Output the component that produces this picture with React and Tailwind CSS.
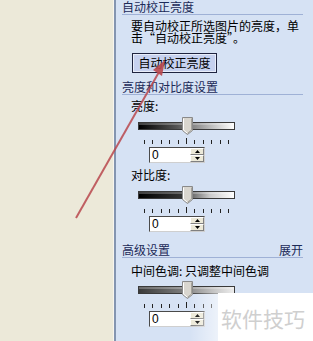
import React from "react";

const font = { fontFamily: '"Noto Sans CJK SC", "Noto Sans", sans-serif' };

function Header({ children, right }) {
  return (
    <div className="ml-[6px] mr-[10px] h-[15px] border-b border-[#9fb1d6] flex justify-between items-end text-[12px] leading-[14px] text-[#1c2a58]">
      <span>{children}</span>
      {right && <span>{right}</span>}
    </div>
  );
}

function Thumb() {
  return (
    <svg width="11" height="18" viewBox="0 0 11 18" className="absolute top-0" style={{ left: 44 }}>
      <path d="M0.5 0.5 H10.5 V13.5 L5.5 17.5 L0.5 13.5 Z" fill="#d9d6cf" stroke="#8a8a8a" />
      <path d="M1.5 1.5 V13 L5.5 16.3" fill="none" stroke="#ffffff" />
      <path d="M9.5 1.5 V13 L5.5 16.3" fill="none" stroke="#a5a39c" />
    </svg>
  );
}

function Slider({ gradient, mt = "mt-[4px]" }) {
  return (
    <div className={`relative ml-[22px] w-[97px] h-[18px] ${mt}`}>
      <div className={`absolute left-0 top-[5px] w-[97px] h-[8px] border border-[#3a3a3a] ${gradient}`}>
        <div className="h-[2px] bg-white/25" />
      </div>
      <Thumb />
    </div>
  );
}

function Ticks() {
  const ticks = Array.from({ length: 11 });
  return (
    <div className="ml-[28px] w-[85px] h-[6px] mt-[3px] flex justify-between items-end">
      {ticks.map((_, i) => (
        <div key={i} className={`w-[1px] bg-[#222] ${i === 5 ? "h-[6px]" : "h-[4px]"}`} />
      ))}
    </div>
  );
}

function Spin() {
  return (
    <div className="ml-[33px] mt-[3px] w-[56px] h-[16px] flex border border-[#4a4a4a] border-r-[#cfcfcf] border-b-[#cfcfcf] bg-white">
      <div className="flex-1 pl-[2px] text-[12px] leading-[14px] text-black" style={{ fontFamily: '"Liberation Sans", sans-serif' }}>0</div>
      <div className="w-[14px] flex flex-col">
        <div className="h-1/2 bg-[#ece9d8] border border-white border-r-[#808080] border-b-[#808080] flex items-center justify-center">
          <svg width="5" height="3" viewBox="0 0 5 3"><path d="M2.5 0 L5 3 H0 Z" fill="#000" /></svg>
        </div>
        <div className="h-1/2 bg-[#ece9d8] border border-white border-r-[#808080] border-b-[#808080] flex items-center justify-center">
          <svg width="5" height="3" viewBox="0 0 5 3"><path d="M0 0 H5 L2.5 3 Z" fill="#000" /></svg>
        </div>
      </div>
    </div>
  );
}

function Label({ children, mt }) {
  return <div className={`ml-[15px] h-[14px] text-[12px] leading-[14px] text-black ${mt}`}>{children}</div>;
}

export default function App() {
  return (
    <div className="relative w-[313px] h-[341px] flex overflow-hidden" style={font}>
      <div className="w-[113px] h-full bg-[#ece9d9]" />
      <div className="w-[1px] h-full bg-[#f7f5ee]" />
      <div className="w-[2px] h-full bg-[#8495b0]" />
      <div className="flex-1 h-full bg-[#d6e2f4] flex flex-col">
        <Header>自动校正亮度</Header>
        <div className="ml-[15px] mt-[5px] text-[12px] text-black">
          <div className="h-[12px] leading-[12px]">要自动校正所选图片的亮度，单</div>
          <div className="h-[12px] leading-[12px]">击“自动校正亮度”。</div>
        </div>
        <div className="ml-[16px] mt-[9px] w-[85px] h-[20px] border border-[#1f2440] bg-[#c6d1ef] flex items-center justify-center text-[12px] text-black">
          <div className="w-full h-full border border-white/60 flex items-center justify-center leading-[12px]">自动校正亮度</div>
        </div>
        <div className="mt-[7px]">
          <Header>亮度和对比度设置</Header>
        </div>
        <Label mt="mt-[4px]">亮度:</Label>
        <Slider gradient="bg-[linear-gradient(to_right,#000_0%,#555_40%,#bbb_75%,#fff_100%)]" />
        <Ticks />
        <Spin />
        <Label mt="mt-[5px]">对比度:</Label>
        <Slider gradient="bg-[linear-gradient(to_right,#000_0%,#333_45%,#ccc_75%,#fff_100%)]" />
        <Ticks />
        <Spin />
        <div className="mt-[11px]">
          <Header right="展开">高级设置</Header>
        </div>
        <Label mt="mt-[6px]">中间色调: 只调整中间色调</Label>
        <Slider mt="mt-[3px]" gradient="bg-[linear-gradient(to_right,#3a3a3a_0%,#7a7a7a_45%,#c8c8c8_80%,#ececec_100%)]" />
        <Ticks />
        <Spin />
      </div>

      {/* watermark */}
      <div className="absolute left-[190px] top-[293px] w-[30px] h-[48px] bg-[linear-gradient(to_right,rgba(255,255,255,0),rgba(255,255,255,0.6))]" />
      <div className="absolute left-[218px] top-[293px] w-[95px] h-[48px] bg-white" />
      <div className="absolute left-[221px] top-[306px] text-[21px] leading-[24px] text-[#cfcfcf]" style={font}>软件技巧</div>

      {/* arrow */}
      <svg className="absolute left-0 top-0 pointer-events-none" width="313" height="341" viewBox="0 0 313 341">
        <line x1="76" y1="218" x2="159" y2="72" stroke="#b9474c" strokeWidth="2" strokeOpacity="0.85" />
        <polygon points="165,60 162,76 153,70" fill="#b9474c" fillOpacity="0.9" />
      </svg>
    </div>
  );
}
